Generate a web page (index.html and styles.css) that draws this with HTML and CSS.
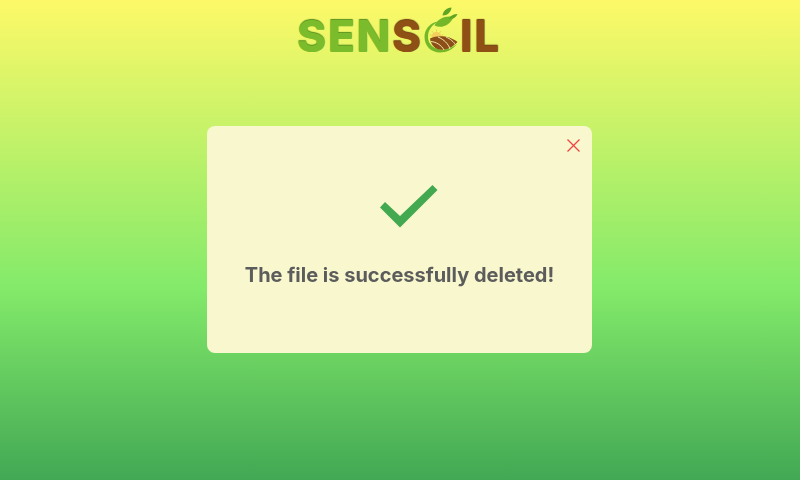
FILE: index.html
```html
<!DOCTYPE html>
<html lang="en">
<head>
<meta charset="utf-8">
<title>SENSOIL</title>
<link rel="stylesheet" href="styles.css">
</head>
<body>
<div class="page">
  <header class="logo" aria-label="SENSOIL">
    <span class="logo-green">SEN</span><span class="logo-brown">S</span>
    <svg class="logo-mark" viewBox="422 6 36 48" width="36" height="48" aria-hidden="true">
      <path d="M437 21.500C428 23 423.500 30 423.500 37 423.500 46 430 52.500 439 52.500 446 52.500 452 49 456 44 451 48 446 49.500 441 49.500 433 49.500 427 44 427 37 427 30 431 25 437 21.500z" fill="#74b82a"/>
      <path d="M430.500 37a5 5 0 0 1 10 0z" fill="#f2cf5e"/>
      <path d="M435.500 29.500v2M431 31.200l1.300 1.500M440 31.200l-1.300 1.500M428.800 35h1.600M442.200 35h-1.600" stroke="#e8c24a" stroke-width=".8" fill="none"/>
      <path d="M429 38.500C436 35 448 35 456.500 42 452 47 446 49.800 441 49.800 434 49.800 430 45 429 38.500z" fill="#8c4f18"/>
      <path d="M437 37C443 39.500 447.500 44 449 49M445 37C449.500 39 453 42 454 44.500M430 41.500C435 42 440.500 45 443 50" stroke="#f3e7ae" stroke-width="1" fill="none"/>
      <path d="M433.500 25.500C437 18 445 15.500 452.500 17 450 24 441 29.500 433.500 25.500z" fill="#74b82a"/>
      <path d="M441.500 15.500C442 11 445.500 8 450.500 7.500 450 12 446.500 15.500 441.500 15.500z" fill="#5ea523"/>
      <path d="M448 18.500C449.500 15.500 452.500 14 456.500 14 455 17.500 452 19.500 448 18.500z" fill="#5ea523"/>
    </svg>
    <span class="logo-brown">IL</span>
  </header>
  <main class="dialog-wrap">
    <section class="dialog">
      <button class="close" type="button" aria-label="Close">
        <svg viewBox="0 0 13 13" width="13" height="13" aria-hidden="true"><path d="M.5.5l12 12M12.500.5l-12 12" stroke="#ef4444" stroke-width="1.300" fill="none"/></svg>
      </button>
      <svg class="check" viewBox="0 0 58 43" width="58" height="43" aria-hidden="true"><path d="M0 22.500l5-5.500 15 14L52.500 0 57.500 5 20 42.500z" fill="#42a950"/></svg>
      <p class="message">The file is successfully deleted!</p>
    </section>
  </main>
</div>
</body>
</html>
```
FILE: styles.css
```css
html, body {
  margin: 0;
  height: 100%;
}
body {
  font-family: Inter, "Liberation Sans", sans-serif;
  overflow: hidden;
}
.page {
  height: 480px;
  background: linear-gradient(180deg, #fdf968 0%, #83ea6a 60%, #42a854 100%);
  display: flex;
  flex-direction: column;
  align-items: center;
}
.logo {
  height: 56px;
  display: flex;
  align-items: center;
  font-size: 44px;
  font-weight: 800;
  letter-spacing: 1.8px;
  line-height: 56px;
  margin-top: 8px;
  margin-bottom: 62px;
  margin-right: 2px;
}
.logo-green {
  color: #7abc2b;
  text-shadow: 0 -1px 1px #55901e;
}
.logo-brown {
  color: #8f5016;
  text-shadow: 0 -1px 1px #6b3a10;
}
.logo-mark {
  margin: -12px 1px 0 0;
}
.dialog-wrap {
  display: flex;
  justify-content: center;
  padding-right: 1px;
}
.dialog {
  position: relative;
  box-sizing: border-box;
  width: 385px;
  height: 227px;
  background: #f9f7cd;
  border-radius: 8px;
  display: flex;
  flex-direction: column;
  align-items: center;
  padding-top: 59px;
}
.close {
  position: absolute;
  top: 13px;
  right: 12px;
  padding: 0;
  border: 0;
  background: none;
  display: flex;
}
.check {
  display: block;
  margin-left: 19px;
}
.message {
  margin: 33px 0 0;
  font-size: 20px;
  line-height: 28px;
  font-weight: 700;
  color: #5c5c5c;
  transform: translateZ(0);
}
```
